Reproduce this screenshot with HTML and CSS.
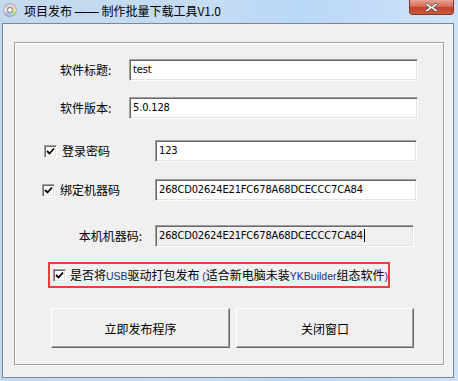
FILE: index.html
```html
<!DOCTYPE html>
<html lang="zh-CN">
<head>
    <meta charset="UTF-8">
    <title>项目发布 —— 制作批量下载工具V1.0</title>
    <link rel="stylesheet" href="styles.css">
</head>
<body>
    <div class="window">
        <div class="titlebar">
            <span class="app-icon"></span>
            <span class="title">项目发布 <span class="dash">——</span> 制作批量下载工具V1.0</span>
            <button class="close-btn">
                <svg width="17" height="11" viewBox="0 0 17 11">
                    <path d="M4 1 L8.5 4.5 L13 1 L15 2.5 L10.8 5.5 L15 8.5 L13 10 L8.5 6.5 L4 10 L2 8.5 L6.2 5.5 L2 2.5 Z" fill="#fff" stroke="#5a4b4b" stroke-width="0.9" stroke-linejoin="round"/>
                </svg>
            </button>
        </div>

        <div class="client">
            <div class="groupbox">
                <div class="row row-title">
                    <span class="field-label">软件标题:</span>
                    <div class="textbox tb-wide">test</div>
                </div>
                <div class="row row-version">
                    <span class="field-label">软件版本:</span>
                    <div class="textbox tb-wide">5.0.128</div>
                </div>
                <div class="row row-password">
                    <span class="check-group">
                        <span class="checkbox"><svg width="9" height="9" viewBox="0 0 9 9"><path d="M1 4 L3.5 6.5 L8 1.5" fill="none" stroke="#000" stroke-width="1.8"/></svg></span>
                        <span class="check-text">登录密码</span>
                    </span>
                    <div class="textbox tb-mid">123</div>
                </div>
                <div class="row row-bind">
                    <span class="check-group">
                        <span class="checkbox"><svg width="9" height="9" viewBox="0 0 9 9"><path d="M1 4 L3.5 6.5 L8 1.5" fill="none" stroke="#000" stroke-width="1.8"/></svg></span>
                        <span class="check-text">绑定机器码</span>
                    </span>
                    <div class="textbox tb-mid">268CD02624E21FC678A68DCECCC7CA84</div>
                </div>
                <div class="row row-local">
                    <span class="local-label">本机机器码:</span>
                    <div class="textbox tb-narrow disabled"><span class="caret">268CD02624E21FC678A68DCECCC7CA84</span></div>
                </div>

                <div class="usb-box">
                    <span class="checkbox"><svg width="9" height="9" viewBox="0 0 9 9"><path d="M1 4 L3.5 6.5 L8 1.5" fill="none" stroke="#000" stroke-width="1.8"/></svg></span>
                    <span class="usb-text">是否将<span class="latin">USB</span>驱动打包发布 <span class="latin">(</span>适合新电脑未装<span class="latin">YKBuilder</span>组态软件<span class="latin">)</span></span>
                </div>

                <div class="actions">
                    <button class="btn btn-publish">立即发布程序</button>
                    <button class="btn btn-close">关闭窗口</button>
                </div>
            </div>
        </div>
    </div>
</body>
</html>
```

FILE: styles.css
```css
body {
    margin: 0;
    padding: 0;
    background: #ffffff;
    font-family: "Noto Sans CJK SC", "Liberation Sans", sans-serif;
    font-size: 12px;
    color: #000;
}

.window {
    width: 458px;
    height: 381px;
    display: flex;
    flex-direction: column;
    background: linear-gradient(to right, #c2d8ef 0%, #c5dcf3 45%, #b9d7f7 65%, #cfe3f8 100%);
    box-sizing: border-box;
}

/* Barra de titulo */
.titlebar {
    height: 23px;
    display: flex;
    align-items: flex-start;
    padding-left: 3px;
    box-sizing: border-box;
}

.app-icon {
    width: 14px;
    height: 14px;
    margin-top: 3px;
    border-radius: 50%;
    background:
        radial-gradient(circle, #f4f4f4 0 2px, #9a9a9a 2px 3px, transparent 3px),
        conic-gradient(#d9d9d9, #f6c4e4, #f9e58a, #b5e6a4, #9ccaf3, #c9b5ef, #e7e7e7, #cfcfcf, #d9d9d9);
    box-shadow: inset 0 0 0 1px rgba(120, 120, 120, 0.5);
}

.title {
    margin-left: 7px;
    line-height: 22px;
    font-size: 12px;
    white-space: nowrap;
}

.dash {
    font-family: "Liberation Sans", sans-serif;
}

.close-btn {
    margin-left: auto;
    margin-right: 4px;
    width: 45px;
    height: 15px;
    padding: 0;
    border: 1px solid #7d3a2c;
    border-top: none;
    border-radius: 0 0 4px 4px;
    background: linear-gradient(to bottom, #e7a394 0%, #d86e58 45%, #c4422a 55%, #c85a3f 100%);
    display: flex;
    align-items: center;
    justify-content: center;
}

/* Area cliente */
.client {
    flex: 1;
    margin: 0 4px 3px 2px;
    border: 1px solid #7b8794;
    background: #f0f0f0;
    padding: 18px 9px 12px 11px;
    display: flex;
    flex-direction: column;
}

.groupbox {
    flex: 1;
    border: 1px solid #a0a0a0;
    box-shadow: inset 1px 1px 0 #fff, 1px 1px 0 #fff;
    display: flex;
    flex-direction: column;
}

.row {
    display: flex;
    align-items: center;
    height: 22px;
}

.row-title {
    margin-top: 16px;
    padding-left: 45px;
}

.row-version {
    margin-top: 16px;
    padding-left: 45px;
}

.row-password {
    margin-top: 21px;
    padding-left: 29px;
}

.row-bind {
    margin-top: 17px;
    padding-left: 27px;
}

.row-local {
    margin-top: 24px;
}

.field-label {
    width: 69px;
    line-height: 22px;
}

.check-group {
    display: flex;
    align-items: center;
    width: 111px;
}

.row-bind .check-group {
    width: 113px;
}

.check-text {
    line-height: 22px;
}

.local-label {
    width: 140px;
    padding-right: 13px;
    box-sizing: border-box;
    text-align: right;
    line-height: 22px;
}

.checkbox {
    width: 13px;
    height: 13px;
    box-sizing: border-box;
    margin-right: 5px;
    background: #fff;
    border: 1px solid;
    border-color: #a0a0a0 #fff #fff #a0a0a0;
    box-shadow: inset 1px 1px 0 #696969, inset -1px -1px 0 #e3e3e3;
    display: flex;
    align-items: center;
    justify-content: center;
    flex-shrink: 0;
}

.textbox {
    height: 22px;
    box-sizing: border-box;
    background: #fff;
    border: 1px solid;
    border-color: #a0a0a0 #fff #fff #a0a0a0;
    box-shadow: inset 1px 1px 0 #696969, inset -1px -1px 0 #e3e3e3;
    padding-left: 3px;
    font-family: "DejaVu Sans Condensed", "DejaVu Sans", sans-serif;
    font-stretch: condensed;
    font-size: 11px;
    letter-spacing: -0.15px;
    line-height: 20px;
    white-space: nowrap;
    overflow: hidden;
}

.tb-wide {
    width: 289px;
}

.tb-mid {
    width: 262px;
}

.tb-narrow {
    width: 259px;
}

.textbox.disabled {
    background: #f0f0f0;
}

.caret {
    border-right: 1px solid #000;
    padding-right: 1px;
}

/* Casilla USB con marco rojo */
.usb-box {
    margin-top: 15px;
    margin-left: 33px;
    width: 342px;
    height: 26px;
    box-sizing: border-box;
    border: 2px solid #f23b3b;
    padding-left: 3px;
    display: flex;
    align-items: center;
}

.usb-box .checkbox {
    margin-right: 4px;
}

.usb-text {
    white-space: nowrap;
    line-height: 20px;
}

.latin {
    font-family: "Liberation Sans", sans-serif;
    font-size: 10.5px;
    color: #1e2c86;
}

/* Botones */
.actions {
    margin-top: 20px;
    margin-left: 36px;
    display: flex;
    gap: 6px;
}

.btn {
    height: 40px;
    padding: 0;
    background: #f0f0f0;
    border: 1px solid;
    border-color: #fff #696969 #696969 #fff;
    box-shadow: inset -1px -1px 0 #a0a0a0;
    font-family: "Noto Sans CJK SC", sans-serif;
    font-size: 12px;
    color: #000;
}

.btn-publish {
    width: 179px;
}

.btn-close {
    width: 178px;
}
```
